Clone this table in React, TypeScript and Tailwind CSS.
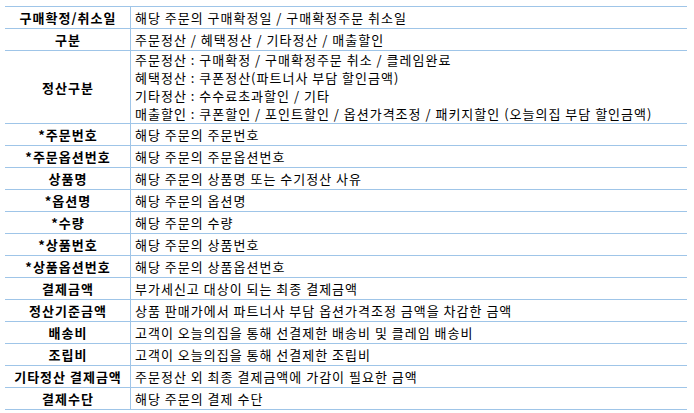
const rows: { label: string; lines: string[] }[] = [
  { label: "구매확정/취소일", lines: ["해당 주문의 구매확정일 / 구매확정주문 취소일"] },
  { label: "구분", lines: ["주문정산 / 혜택정산 / 기타정산 / 매출할인"] },
  {
    label: "정산구분",
    lines: [
      "주문정산 : 구매확정 / 구매확정주문 취소 / 클레임완료",
      "혜택정산 : 쿠폰정산(파트너사 부담 할인금액)",
      "기타정산 : 수수료초과할인 / 기타",
      "매출할인 : 쿠폰할인 / 포인트할인 / 옵션가격조정 / 패키지할인 (오늘의집 부담 할인금액)",
    ],
  },
  { label: "*주문번호", lines: ["해당 주문의 주문번호"] },
  { label: "*주문옵션번호", lines: ["해당 주문의 주문옵션번호"] },
  { label: "상품명", lines: ["해당 주문의 상품명 또는 수기정산 사유"] },
  { label: "*옵션명", lines: ["해당 주문의 옵션명"] },
  { label: "*수량", lines: ["해당 주문의 수량"] },
  { label: "*상품번호", lines: ["해당 주문의 상품번호"] },
  { label: "*상품옵션번호", lines: ["해당 주문의 상품옵션번호"] },
  { label: "결제금액", lines: ["부가세신고 대상이 되는 최종 결제금액"] },
  { label: "정산기준금액", lines: ["상품 판매가에서 파트너사 부담 옵션가격조정 금액을 차감한 금액"] },
  { label: "배송비", lines: ["고객이 오늘의집을 통해 선결제한 배송비 및 클레임 배송비"] },
  { label: "조립비", lines: ["고객이 오늘의집을 통해 선결제한 조립비"] },
  { label: "기타정산 결제금액", lines: ["주문정산 외 최종 결제금액에 가감이 필요한 금액"] },
  { label: "결제수단", lines: ["해당 주문의 결제 수단"] },
];

const App = () => {
  return (
    <div
      className="min-h-[413px] bg-white pt-[6px] pl-[5px] text-[13px] text-black"
      style={{ fontFamily: '"Noto Sans CJK KR", "Noto Sans", sans-serif' }}
    >
      <div className="w-[682px] border-t border-[#9fc5e8]">
        {rows.map((row) => (
          <div key={row.label} className="flex border-b border-[#9fc5e8]">
            <div className="w-[126px] shrink-0 border-r border-[#9fc5e8] flex items-center justify-center pl-[1px] font-bold tracking-[1px] leading-[21px] whitespace-nowrap">
              {row.label}
            </div>
            <div className={`flex-1 pl-[4px] tracking-[1px] ${row.lines.length > 1 ? "leading-[18px]" : "leading-[21px]"}`}>
              {row.lines.map((line) => (
                <div key={line} className="whitespace-nowrap">
                  {line}
                </div>
              ))}
            </div>
          </div>
        ))}
      </div>
    </div>
  );
};

export default App;
